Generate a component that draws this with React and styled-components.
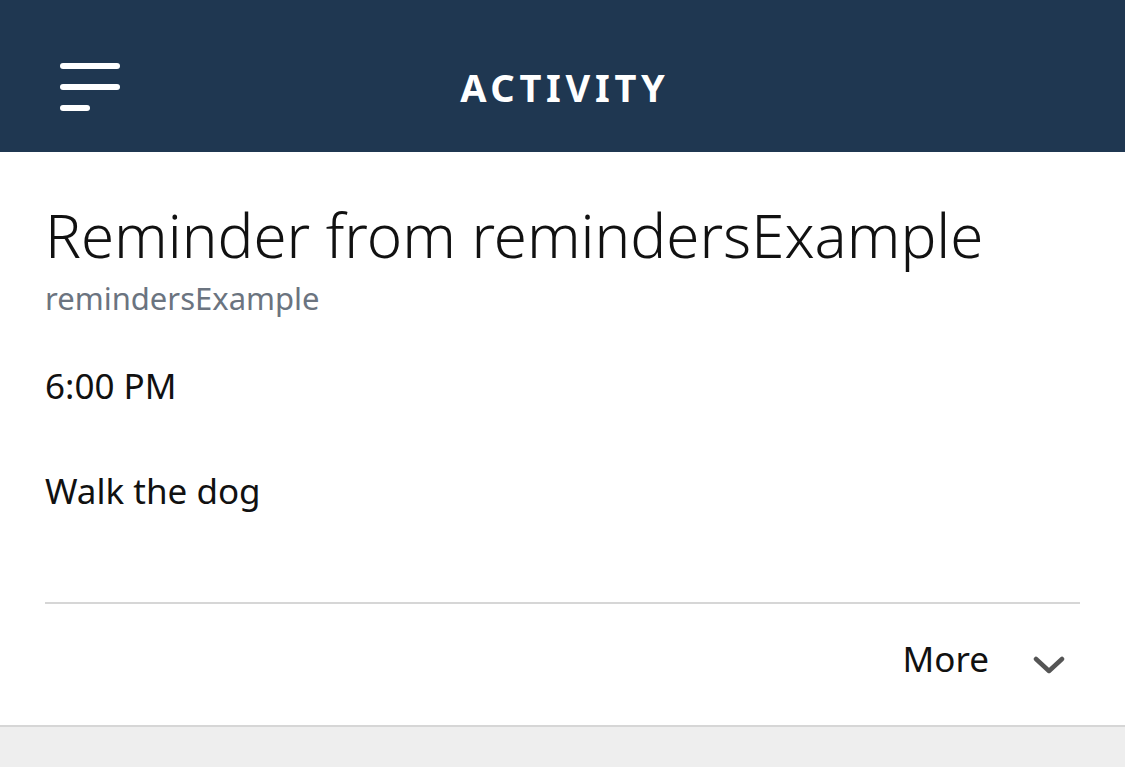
import React from 'react';
import styled, { createGlobalStyle } from 'styled-components';

const GlobalStyle = createGlobalStyle`
  html, body {
    margin: 0;
    padding: 0;
    background: #eeeeee;
    font-family: 'Noto Sans', 'Open Sans', sans-serif;
  }
`;

const Header = styled.header`
  height: 152px;
  background: #1f3751;
  display: grid;
  grid-template-columns: 1fr auto 1fr;
  align-items: center;
  padding: 21px 60px 0;
  box-sizing: border-box;
`;

const MenuButton = styled.button`
  width: 60px;
  height: 48px;
  padding: 0;
  border: none;
  background: none;
  display: flex;
  flex-direction: column;
  justify-content: space-between;
  cursor: pointer;
`;

const MenuLine = styled.span`
  display: block;
  height: 6px;
  width: ${p => (p.$short ? '30px' : '60px')};
  background: #fff;
  border-radius: 3px;
`;

const HeaderTitle = styled.h1`
  margin: 0;
  color: #fff;
  font-size: 38px;
  line-height: 48px;
  font-weight: 700;
  letter-spacing: 4.7px;
  margin-right: -4.7px;
`;

const Card = styled.section`
  background: #fff;
  border-bottom: 2px solid #d6d6d6;
  padding: 48px 45px 0;
`;

const Title = styled.h2`
  margin: 0;
  font-size: 60px;
  font-weight: 300;
  color: #111;
  line-height: 70px;
`;

const Source = styled.div`
  margin-top: 8px;
  font-size: 31px;
  line-height: 40px;
  color: #6b7480;
`;

const Body = styled.p`
  margin: ${p => p.$gap}px 0 0;
  font-size: 35px;
  line-height: 40px;
  color: #111;
`;

const Footer = styled.div`
  margin-top: 91px;
  border-top: 2px solid #d6d6d6;
  height: 121px;
  box-sizing: content-box;
  display: flex;
  align-items: center;
  justify-content: flex-end;
  gap: 44px;
  padding: 0 15px 0 0;
`;

const FooterInner = styled.div`
  display: flex;
  align-items: center;
  gap: 44px;
  margin-bottom: 12px;
`;

const MoreLabel = styled.span`
  font-size: 35px;
  line-height: 40px;
  color: #111;
`;

const ChevronIcon = styled.svg`
  margin-top: 13px;
`;

const Chevron = () => (
  <ChevronIcon width="32" height="20" viewBox="0 0 32 20">
    <path d="M3 4 L16 16 L29 4" fill="none" stroke="#555" strokeWidth="4.5" strokeLinecap="round" strokeLinejoin="round" />
  </ChevronIcon>
);

export default function App() {
  return (
    <>
      <GlobalStyle />
      <Header>
        <MenuButton aria-label="menu">
          <MenuLine />
          <MenuLine />
          <MenuLine $short />
        </MenuButton>
        <HeaderTitle>ACTIVITY</HeaderTitle>
      </Header>
      <Card>
        <Title>Reminder from remindersExample</Title>
        <Source>remindersExample</Source>
        <Body $gap={48}>6:00 PM</Body>
        <Body $gap={65}>Walk the dog</Body>
        <Footer>
          <FooterInner>
            <MoreLabel>More</MoreLabel>
            <Chevron />
          </FooterInner>
        </Footer>
      </Card>
    </>
  );
}
